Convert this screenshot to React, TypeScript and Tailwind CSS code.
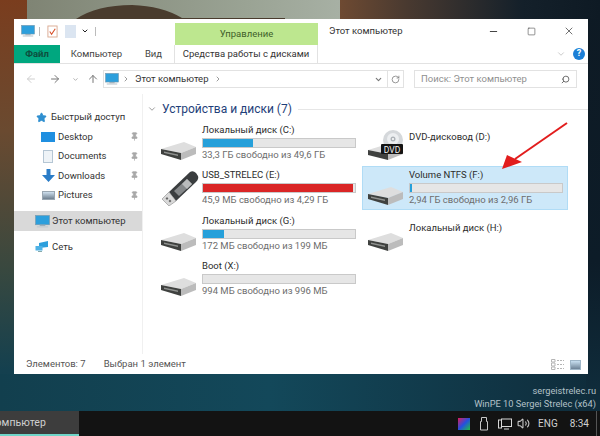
import React from "react";
import { ArrowLeft, ArrowRight, ArrowUp, ChevronDown, ChevronRight, RotateCw, Search, Minus, Square, X, Pin, Star, Volume2 } from "lucide-react";

const Monitor = ({ s = 16 }: { s?: number }) => (
  <svg width={s} height={s} viewBox="0 0 16 16" className="shrink-0">
    <rect x="0.5" y="1.5" width="15" height="10" fill="#2d9fdc" stroke="#7f97a6" strokeWidth="0.6" />
    <rect x="5" y="11.5" width="6" height="1.5" fill="#9fb0ba" />
    <rect x="2" y="13" width="12" height="1.4" fill="#c3ccd2" />
  </svg>
);

const Hdd = () => (
  <svg width="36" height="20" viewBox="0 0 36 20" className="shrink-0">
    <path d="M0 8 L23 1 L35 6 L20 12 Z" fill="#dedede" />
    <path d="M20 12 L35 6 L35 13 L20 19 Z" fill="#bcbcbc" />
    <path d="M0 8 L20 12 L20 19 L0 13 Z" fill="#3f413f" />
    <path d="M3 10.5 L17 13.5 L17 15 L3 12 Z" fill="#8f918f" />
  </svg>
);

const UsbStick = () => (
  <svg width="38" height="36" viewBox="0 0 38 36" className="shrink-0">
    <path d="M8 22 L29 2 Q32 0 35 3 L37 6 Q38 9 35 12 L15 31 Z" fill="#3a3d3f" />
    <path d="M13 21 L26 9 L31 14 L18 26 Z" fill="#85888a" />
    <path d="M21 14 L26 9 L31 14 L26 19 Z" fill="#b9bbbc" />
    <path d="M1 29 L8 22 L15 31 L8 36 Z" fill="#d9d9d9" stroke="#777" strokeWidth="0.5" />
    <rect x="5" y="27.5" width="2" height="2" fill="#666" transform="rotate(-45 6 28.5)" />
    <rect x="8" y="30" width="2" height="2" fill="#666" transform="rotate(-45 9 31)" />
  </svg>
);

const Dvd = () => (
  <svg width="36" height="31" viewBox="0 0 36 31" className="shrink-0">
    <circle cx="25" cy="10" r="10" fill="#d5d8db" />
    <circle cx="25" cy="9" r="6" fill="#eceef0" />
    <circle cx="25" cy="9" r="2.5" fill="#aeb3b8" />
    <circle cx="25" cy="9" r="1" fill="#ffffff" />
    <path d="M0 20 L23 13 L35 18 L20 24 Z" fill="#dedede" />
    <path d="M20 24 L35 18 L35 24 L20 30 Z" fill="#bcbcbc" />
    <path d="M0 20 L20 24 L20 30 L0 25 Z" fill="#3f413f" />
    <rect x="13" y="14" width="22" height="10" rx="1" fill="#141414" />
    <text x="24" y="22.5" textAnchor="middle" fontSize="8.5" fill="#f2f2f2" fontFamily="Roboto, sans-serif">DVD</text>
  </svg>
);

function Drive({ name, free, pct, icon, red, selected }: { name: string; free?: string; pct?: number; icon: React.ReactNode; red?: boolean; selected?: boolean }) {
  return (
    <div className={`flex h-[42px] ${selected ? "bg-[#cde8f9] outline outline-[#b0dcf6]" : ""}`}>
      <div className="flex w-[46px] shrink-0 items-end pb-[3px] pl-[5px]">{icon}</div>
      <div className={`flex min-w-0 flex-1 flex-col text-[9.5px] leading-[13px] ${pct === undefined ? "pt-[8px]" : "pt-[1px]"}`}>
        <div className="text-[#2b2b2b]">{name}</div>
        {pct !== undefined && (
          <div className="mt-[2px] h-[10px] w-[154px] border border-[#c9c9c9] bg-[#e6e6e6]">
            <div className={`h-full ${red ? "bg-[#da2626]" : "bg-[#26a0da]"}`} style={{ width: `${pct}%` }} />
          </div>
        )}
        {free && <div className="text-[#6d6d6d]">{free}</div>}
      </div>
    </div>
  );
}

function NavRow({ icon, label, pin, active, indent }: { icon: React.ReactNode; label: string; pin?: boolean; active?: boolean; indent?: boolean }) {
  return (
    <div className={`flex ${active ? "h-[20px] bg-[#d9d9d9]" : "h-[19.5px]"} items-center ${indent ? "pl-[26px]" : "pl-[20px]"} pr-[3px] text-[9.5px] text-[#333]`}>
      <span className="flex w-[16px] shrink-0 justify-center">{icon}</span>
      <span className="ml-[2px] flex-1">{label}</span>
      {pin && <Pin size={9} className="fill-[#a8a8a8] text-[#a8a8a8]" />}
    </div>
  );
}

export default function App() {
  return (
    <div
      className="relative flex h-[436px] w-[600px] flex-col overflow-hidden"
      style={{ fontFamily: 'Roboto, "Noto Sans", sans-serif' }}
    >
      {/* wallpaper */}
      <div className="absolute inset-0 bg-[linear-gradient(to_bottom,#7a3d1e_0%,#6a4a30_30%,#38483f_62%,#14404f_85%,#123c4a_100%)]" />
      <div className="absolute inset-x-0 bottom-0 h-[62px] bg-[linear-gradient(to_right,#123f4e,#13485a_45%,#0f2c3b)]" />
      <div className="absolute inset-y-0 right-0 w-[14px] bg-[linear-gradient(to_bottom,#0e1a24,#0d1c28_60%,#0f2c3b_90%)]" />
      <div className="absolute left-[340px] top-0 h-[19px] w-[260px] bg-[linear-gradient(to_right,#6e4a32,#4a3a30_25%,#14202a_70%,#0e1a24)]" />
      <svg width="313" height="19" viewBox="0 0 313 19" className="absolute left-[27px] top-0">
        <defs>
          <linearGradient id="wall" x1="0" x2="1" y1="0" y2="0">
            <stop offset="0" stopColor="#7f8474" />
            <stop offset="0.7" stopColor="#9aa394" />
            <stop offset="1" stopColor="#a7b0a4" />
          </linearGradient>
        </defs>
        <rect width="313" height="19" fill="url(#wall)" />
        <path d="M49 19 Q70 5 105 5 Q135 6 155 18 L258 18 L258 20 L49 20 Z" fill="#4a3c2e" />
      </svg>

      <div className="relative mx-[14px] mt-[19px] flex h-[355px] w-[574px] flex-col bg-white text-[#333]">
        {/* title bar */}
        <div className="flex h-[26px] items-stretch">
          <div className="flex w-[161px] items-center pl-[7px] pb-[2px]">
            <Monitor s={14} />
            <span className="ml-[4px] h-[9px] w-px bg-[#bbb]" />
            <svg width="11" height="13" viewBox="0 0 12 14" className="ml-[7px]">
              <rect x="1" y="1" width="10" height="12" fill="#fff" stroke="#d9a88f" />
              <path d="M3 7 L5 10 L9 4" stroke="#d8502a" fill="none" strokeWidth="1.2" />
            </svg>
            <span className="ml-[7px] h-[13px] w-[11px] bg-[#dbe5f1]" />
            <ChevronDown size={8} className="ml-[5px] text-[#222]" strokeWidth={3} />
            <span className="ml-[6px] h-[9px] w-px bg-[#bbb]" />
          </div>
          <div className="mt-[4px] flex w-[143px] items-center justify-center bg-[#bde78f] text-[9.5px] text-[#3f5f2a]">Управление</div>
          <div className="flex flex-1 items-center pl-[11px] pb-[1px] text-[9.5px] text-[#333]">Этот компьютер</div>
          <div className="flex w-[100px] items-center justify-between pb-[2px] pr-[13px] text-[#333]">
            <Minus size={11} />
            <Square size={9} strokeWidth={1.4} />
            <X size={12} strokeWidth={1.4} />
          </div>
        </div>
        {/* ribbon tabs */}
        <div className="flex h-[19px] items-stretch border-b border-[#e2e2e2] text-[9.5px]">
          <div className="flex w-[46px] items-center justify-center bg-[#00a77f] font-bold text-[#0d4f3e]">Файл</div>
          <div className="flex w-[73px] items-center justify-center text-[#444]">Компьютер</div>
          <div className="flex w-[42px] items-center justify-center border-r border-[#e2e2e2] text-[#444]">Вид</div>
          <div className="flex w-[143px] items-center justify-center border-r border-[#e2e2e2] text-[#333]">Средства работы с дисками</div>
          <div className="flex flex-1 items-center justify-end pr-[3px]">
            <ChevronDown size={10} className="mr-[7px] text-[#c0c0c0]" />
            <span className="flex h-[12px] w-[12px] items-center justify-center rounded-full bg-[#1c7fd6] text-[9px] font-bold text-white">?</span>
          </div>
        </div>
        {/* address bar */}
        <div className="flex h-[30px] items-center pl-[11px] pr-[11px]">
          <ArrowLeft size={12} className="text-[#cfcfcf]" />
          <ArrowRight size={12} className="ml-[12px] text-[#777]" />
          <ChevronDown size={7} strokeWidth={3} className="ml-[11px] text-[#aaa]" />
          <ArrowUp size={12} className="ml-[8px] text-[#777]" />
          <div className="ml-[4px] flex h-[18px] flex-1 items-center border border-[#e2e2e2] pl-[1px] text-[9.5px]">
            <Monitor s={14} />
            <ChevronRight size={8} className="ml-[3px] text-[#888]" strokeWidth={2.5} />
            <span className="ml-[5px]">Этот компьютер</span>
            <ChevronRight size={8} className="ml-[5px] text-[#888]" strokeWidth={2.5} />
            <span className="flex-1" />
            <ChevronDown size={9} strokeWidth={3} className="mr-[4px] text-[#777]" />
            <span className="flex h-full w-[16px] items-center justify-center border-l border-[#e2e2e2]">
              <RotateCw size={9} className="text-[#777]" />
            </span>
          </div>
          <div className="ml-[10px] flex h-[18px] w-[163px] items-center justify-between border border-[#e2e2e2] pl-[6px] pr-[6px] text-[9.5px] text-[#8f8f8f]">
            <span>Поиск: Этот компьютер</span>
            <Search size={9} strokeWidth={2.5} className="-scale-x-100 text-[#666]" />
          </div>
        </div>
        {/* body */}
        <div className="flex min-h-0 flex-1">
          <div className="flex w-[129px] shrink-0 flex-col border-r border-[#f0f0f0] pt-[14px]">
            <div className="flex h-[19px] items-center pl-[22px] text-[9.5px] text-[#333]">
              <Star size={11} className="fill-[#2f8fd0] text-[#2f8fd0]" />
              <span className="ml-[4px]">Быстрый доступ</span>
            </div>
            <NavRow indent label="Desktop" pin icon={<span className="block h-[10px] w-[14px] bg-[#1f8fe0]" />} />
            <NavRow indent label="Documents" pin icon={<span className="block h-[13px] w-[10px] border border-[#b5c6d4] bg-[#eef3f7]" />} />
            <NavRow
              indent
              label="Downloads"
              pin
              icon={
                <svg width="13" height="13" viewBox="0 0 13 13">
                  <path d="M4.5 0 H8.5 V6 H13 L6.5 13 L0 6 H4.5 Z" fill="#2a7cc7" />
                </svg>
              }
            />
            <NavRow indent label="Pictures" pin icon={<span className="block h-[9px] w-[13px] border border-[#9aa7b2] bg-[linear-gradient(to_top,#6f8090,#cfe0ee)]" />} />
            <div className="mt-[6px]">
              <NavRow label="Этот компьютер" active icon={<Monitor s={15} />} />
            </div>
            <div className="mt-[6px]">
              <NavRow
                label="Сеть"
                icon={
                  <svg width="14" height="13" viewBox="0 0 14 13">
                    <path d="M4 3 L13 1 V7 L4 8 Z" fill="#2d9fdc" />
                    <rect x="0.5" y="6" width="7" height="4.5" fill="#4fb2e5" />
                    <rect x="3" y="11" width="4" height="1" fill="#8aa" />
                  </svg>
                }
              />
            </div>
          </div>
          <div className="flex min-w-0 flex-1 flex-col pl-[4px] pt-[7px]">
            <div className="flex h-[16px] items-center">
              <ChevronDown size={10} className="text-[#8a8a8a]" />
              <span className="ml-[5px] text-[12px] text-[#1f3f7a]">Устройства и диски (7)</span>
              <span className="ml-[6px] h-px flex-1 bg-[#e6e6e6]" />
            </div>
            <div className="ml-[9px] mt-[4.5px] grid grid-cols-[207px_204px]">
              <div className="flex flex-col gap-y-[3.5px]">
                <Drive name="Локальный диск (C:)" pct={33} free="33,3 ГБ свободно из 49,6 ГБ" icon={<Hdd />} />
                <Drive name="USB_STRELEC (E:)" pct={99} red free="45,9 МБ свободно из 4,29 ГБ" icon={<UsbStick />} />
                <Drive name="Локальный диск (G:)" pct={14} free="172 МБ свободно из 199 МБ" icon={<Hdd />} />
                <Drive name="Boot (X:)" pct={0} free="994 МБ свободно из 996 МБ" icon={<Hdd />} />
              </div>
              <div className="flex flex-col gap-y-[3.5px]">
                <Drive name="DVD-дисковод (D:)" icon={<Dvd />} />
                <Drive name="Volume NTFS (F:)" pct={1} selected free="2,94 ГБ свободно из 2,96 ГБ" icon={<Hdd />} />
                <Drive name="Локальный диск (H:)" icon={<Hdd />} />
              </div>
            </div>
          </div>
        </div>
        {/* status */}
        <div className="flex h-[20px] items-center pl-[12px] pr-[7px] pt-[1px] text-[9.5px] text-[#555]">
          <span>Элементов: 7</span>
          <span className="ml-[18px]">Выбран 1 элемент</span>
          <span className="flex-1" />
          <svg width="13" height="11" viewBox="0 0 13 11">
            <path d="M0.5 0.5 H4 V3 H0.5 Z M0.5 4 H4 V7 H0.5 Z M0.5 8 H4 V10.5 H0.5 Z" fill="none" stroke="#b5b5b5" />
            <path d="M6 1.5 H13 M6 5.5 H13 M6 9.5 H13" stroke="#b5b5b5" strokeDasharray="2 1" />
          </svg>
          <span className="ml-[6px] h-[10px] w-[11px] border border-[#9fb6c8] bg-[linear-gradient(to_top,#6d8296,#c8dff0)]" />
        </div>
        {/* arrow */}
        <svg width="70" height="50" viewBox="0 0 70 50" className="absolute left-[487px] top-[102px]">
          <path d="M66 2 L14 38" stroke="#e21d1d" strokeWidth="2" fill="none" />
          <path d="M1 48 L6 34 L21 41 Z" fill="#e21d1d" />
        </svg>
      </div>

      <div className="relative mt-[10px] flex flex-col items-end pr-[4px] text-[9.25px] leading-[13px] text-[#b3c1c8]">
        <span>sergeistrelec.ru</span>
        <span>WinPE 10 Sergei Strelec (x64)</span>
      </div>

      <div className="relative mt-auto flex h-[25px] items-stretch bg-[#131313] text-[10px] text-[#d0d0d0]">
        <div className="flex w-[79px] items-center overflow-hidden border-b-2 border-[#6fd5c8] bg-[#3d3d3d]">
          <span className="-ml-[11px] whitespace-nowrap text-[10.5px]">Компьютер</span>
        </div>
        <span className="flex-1" />
        <div className="flex items-center pr-[3px]">
          <span className="h-[12px] w-[12px] bg-[linear-gradient(135deg,#e01b5a,#2450e0_50%,#20c040)]" />
          <svg width="10" height="14" viewBox="0 0 10 14" className="ml-[9px]">
            <path d="M2.5 0.5 H7.5 V4.5 H8.5 V13 H1.5 V4.5 H2.5 Z" fill="none" stroke="#c8c8c8" />
          </svg>
          <svg width="14" height="12" viewBox="0 0 14 12" className="ml-[9px] text-[#d8d8d8]">
            <rect x="3.5" y="1" width="10" height="7.5" fill="none" stroke="currentColor" />
            <rect x="0.5" y="2" width="3" height="8" fill="none" stroke="currentColor" />
            <path d="M6 11 H11" stroke="currentColor" />
          </svg>
          <Volume2 size={13} className="ml-[5px] text-[#c8c8c8]" />
          <span className="ml-[8px]">ENG</span>
          <span className="ml-[12px]">8:34</span>
          <span className="ml-[7px] h-full w-px bg-[#555]" />
        </div>
      </div>
    </div>
  );
}
